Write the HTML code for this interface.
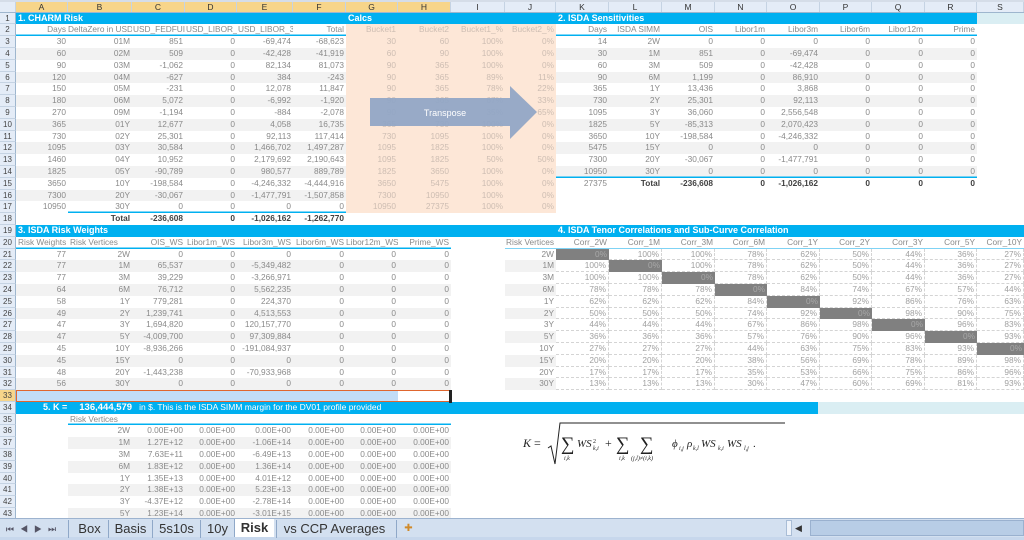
<!DOCTYPE html>
<html><head><meta charset="utf-8"><style>
*{margin:0;padding:0;box-sizing:border-box}
body{width:1024px;height:540px;overflow:hidden;background:#fff;font-family:"Liberation Sans",sans-serif;position:relative}
.ab{position:absolute}
#ch{position:absolute;left:0;top:0;width:1024px;height:12.6px;background:#e4ecf7;border-top:2px solid #d5dde8;display:flex;font-size:8.5px;color:#333;border-bottom:1px solid #9eb6ce}
#ch i{font-style:normal;text-align:center;border-right:1px solid #c5d3e3;line-height:10px}
#ch i.o{background:#f7d58a}
#g{position:absolute;left:0;top:12.6px;width:1024px}
.r{display:flex;height:11.8px;font-size:8.3px;color:#8a8a8a;line-height:11.8px}
.r i{font-style:normal;text-align:right;padding-right:2px;white-space:nowrap;overflow:hidden;height:11.8px;flex:none}
.r i:nth-child(1){width:16px;background:#e4ecf7;color:#444;text-align:center;padding:0;border-right:1px solid #9eb6ce;border-bottom:1px solid #c5d3e3;font-size:8px}
.r i:nth-child(2){width:52px}.r i:nth-child(3){width:64px}.r i:nth-child(4){width:53px}.r i:nth-child(5){width:52px}
.r i:nth-child(6){width:56px}.r i:nth-child(7){width:53px}.r i:nth-child(8){width:52px}.r i:nth-child(9){width:53px}
.r i:nth-child(10){width:54px}.r i:nth-child(11){width:51px}.r i:nth-child(12){width:53px}.r i:nth-child(13){width:53px}
.r i:nth-child(14){width:53px}.r i:nth-child(15){width:52px}.r i:nth-child(16){width:53px}.r i:nth-child(17){width:52px}
.r i:nth-child(18){width:53px}.r i:nth-child(19){width:52px}.r i:nth-child(20){width:47px}
.r i.g{background:#f2f2f2}
.r i.u{box-shadow:inset 0 -1.5px #00b0f0}
.r i.p{color:#cdbdb2}
.r i.b{font-weight:bold;color:#404040}
.r i.l{text-align:left;overflow:visible;padding-left:2px}
.r i.h{color:#fff;font-weight:bold;font-size:9px;overflow:visible;text-align:left;padding-left:2px}
.r i.x{border-right:1px dashed #d4d4d4;border-bottom:1px dashed #d4d4d4;color:#a0a0a0}
.r i.d{background:#808080;color:#a8a8a8}
.r i.o{background:#f7d58a}
.r i.v{box-shadow:inset 0 -1px #7fd3f5}
.tab{position:absolute;top:520px;height:18px;font-size:13px;color:#333;line-height:18px;text-align:center}
</style></head><body>
<div class="ab" style="left:16px;top:12.6px;width:961px;height:11.8px;background:#00b0f0"></div>
<div class="ab" style="left:977px;top:12.6px;width:47px;height:11.8px;background:#daeef3"></div>
<div class="ab" style="left:346px;top:24.4px;width:210px;height:188.8px;background:#fde7d7"></div>
<div class="ab" style="left:16px;top:225px;width:1008px;height:11.8px;background:#00b0f0"></div>
<div class="ab" style="left:16px;top:402px;width:802px;height:11.8px;background:#00b0f0"></div>
<div class="ab" style="left:818px;top:402px;width:206px;height:11.8px;background:#daeef3"></div>
<div class="ab" style="left:16px;top:390.2px;width:382px;height:11.8px;background:#c2ddf7"></div>

<div id="ch"><i style="width:16px"></i><i class="o" style="width:52px">A</i><i class="o" style="width:64px">B</i><i class="o" style="width:53px">C</i><i class="o" style="width:52px">D</i><i class="o" style="width:56px">E</i><i class="o" style="width:53px">F</i><i class="o" style="width:52px">G</i><i class="o" style="width:53px">H</i><i style="width:54px">I</i><i style="width:51px">J</i><i style="width:53px">K</i><i style="width:53px">L</i><i style="width:53px">M</i><i style="width:52px">N</i><i style="width:53px">O</i><i style="width:52px">P</i><i style="width:53px">Q</i><i style="width:52px">R</i><i style="width:47px">S</i></div>

<div id="g">
<div class="r"><i>1</i><i class="h">1. CHARM Risk</i><i></i><i></i><i></i><i></i><i></i><i class="h">Calcs</i><i></i><i></i><i></i><i class="h">2. ISDA Sensitivities</i><i></i><i></i><i></i><i></i><i></i><i></i><i></i><i></i></div>
<div class="r"><i>2</i><i class="u">Days</i><i class="u">DeltaZero in USD</i><i class="u" style="text-align:left;padding-left:1px">USD_FEDFUI</i><i class="u" style="text-align:left;padding-left:1px">USD_LIBOR_'</i><i class="u" style="text-align:left;padding-left:1px">USD_LIBOR_3I</i><i class="u">Total</i><i class="p">Bucket1</i><i class="p">Bucket2</i><i class="p">Bucket1_%</i><i class="p">Bucket2_%</i><i class="u">Days</i><i class="u">ISDA SIMM</i><i class="u">OIS</i><i class="u">Libor1m</i><i class="u">Libor3m</i><i class="u">Libor6m</i><i class="u">Libor12m</i><i class="u">Prime</i><i></i></div>
<div class="r"><i>3</i><i>30</i><i>01M</i><i>851</i><i>0</i><i>-69,474</i><i>-68,623</i><i class="p">30</i><i class="p">60</i><i class="p">100%</i><i class="p">0%</i><i>14</i><i>2W</i><i>0</i><i>0</i><i>0</i><i>0</i><i>0</i><i>0</i><i></i></div>
<div class="r"><i>4</i><i class="g">60</i><i class="g">02M</i><i class="g">509</i><i class="g">0</i><i class="g">-42,428</i><i class="g">-41,919</i><i class="p">60</i><i class="p">90</i><i class="p">100%</i><i class="p">0%</i><i class="g">30</i><i class="g">1M</i><i class="g">851</i><i class="g">0</i><i class="g">-69,474</i><i class="g">0</i><i class="g">0</i><i class="g">0</i><i></i></div>
<div class="r"><i>5</i><i>90</i><i>03M</i><i>-1,062</i><i>0</i><i>82,134</i><i>81,073</i><i class="p">90</i><i class="p">365</i><i class="p">100%</i><i class="p">0%</i><i>60</i><i>3M</i><i>509</i><i>0</i><i>-42,428</i><i>0</i><i>0</i><i>0</i><i></i></div>
<div class="r"><i>6</i><i class="g">120</i><i class="g">04M</i><i class="g">-627</i><i class="g">0</i><i class="g">384</i><i class="g">-243</i><i class="p">90</i><i class="p">365</i><i class="p">89%</i><i class="p">11%</i><i class="g">90</i><i class="g">6M</i><i class="g">1,199</i><i class="g">0</i><i class="g">86,910</i><i class="g">0</i><i class="g">0</i><i class="g">0</i><i></i></div>
<div class="r"><i>7</i><i>150</i><i>05M</i><i>-231</i><i>0</i><i>12,078</i><i>11,847</i><i class="p">90</i><i class="p">365</i><i class="p">78%</i><i class="p">22%</i><i>365</i><i>1Y</i><i>13,436</i><i>0</i><i>3,868</i><i>0</i><i>0</i><i>0</i><i></i></div>
<div class="r"><i>8</i><i class="g">180</i><i class="g">06M</i><i class="g">5,072</i><i class="g">0</i><i class="g">-6,992</i><i class="g">-1,920</i><i class="p">90</i><i class="p">365</i><i class="p">67%</i><i class="p">33%</i><i class="g">730</i><i class="g">2Y</i><i class="g">25,301</i><i class="g">0</i><i class="g">92,113</i><i class="g">0</i><i class="g">0</i><i class="g">0</i><i></i></div>
<div class="r"><i>9</i><i>270</i><i>09M</i><i>-1,194</i><i>0</i><i>-884</i><i>-2,078</i><i class="p">90</i><i class="p">365</i><i class="p">35%</i><i class="p">65%</i><i>1095</i><i>3Y</i><i>36,060</i><i>0</i><i>2,556,548</i><i>0</i><i>0</i><i>0</i><i></i></div>
<div class="r"><i>10</i><i class="g">365</i><i class="g">01Y</i><i class="g">12,677</i><i class="g">0</i><i class="g">4,058</i><i class="g">16,735</i><i class="p">365</i><i class="p">730</i><i class="p">100%</i><i class="p">0%</i><i class="g">1825</i><i class="g">5Y</i><i class="g">-85,313</i><i class="g">0</i><i class="g">2,070,423</i><i class="g">0</i><i class="g">0</i><i class="g">0</i><i></i></div>
<div class="r"><i>11</i><i>730</i><i>02Y</i><i>25,301</i><i>0</i><i>92,113</i><i>117,414</i><i class="p">730</i><i class="p">1095</i><i class="p">100%</i><i class="p">0%</i><i>3650</i><i>10Y</i><i>-198,584</i><i>0</i><i>-4,246,332</i><i>0</i><i>0</i><i>0</i><i></i></div>
<div class="r"><i>12</i><i class="g">1095</i><i class="g">03Y</i><i class="g">30,584</i><i class="g">0</i><i class="g">1,466,702</i><i class="g">1,497,287</i><i class="p">1095</i><i class="p">1825</i><i class="p">100%</i><i class="p">0%</i><i class="g">5475</i><i class="g">15Y</i><i class="g">0</i><i class="g">0</i><i class="g">0</i><i class="g">0</i><i class="g">0</i><i class="g">0</i><i></i></div>
<div class="r"><i>13</i><i>1460</i><i>04Y</i><i>10,952</i><i>0</i><i>2,179,692</i><i>2,190,643</i><i class="p">1095</i><i class="p">1825</i><i class="p">50%</i><i class="p">50%</i><i>7300</i><i>20Y</i><i>-30,067</i><i>0</i><i>-1,477,791</i><i>0</i><i>0</i><i>0</i><i></i></div>
<div class="r"><i>14</i><i class="g">1825</i><i class="g">05Y</i><i class="g">-90,789</i><i class="g">0</i><i class="g">980,577</i><i class="g">889,789</i><i class="p">1825</i><i class="p">3650</i><i class="p">100%</i><i class="p">0%</i><i class="g u">10950</i><i class="g u">30Y</i><i class="g u">0</i><i class="g u">0</i><i class="g u">0</i><i class="g u">0</i><i class="g u">0</i><i class="g u">0</i><i></i></div>
<div class="r"><i>15</i><i>3650</i><i>10Y</i><i>-198,584</i><i>0</i><i>-4,246,332</i><i>-4,444,916</i><i class="p">3650</i><i class="p">5475</i><i class="p">100%</i><i class="p">0%</i><i>27375</i><i class="b">Total</i><i class="b">-236,608</i><i class="b">0</i><i class="b">-1,026,162</i><i class="b">0</i><i class="b">0</i><i class="b">0</i><i></i></div>
<div class="r"><i>16</i><i class="g">7300</i><i class="g">20Y</i><i class="g">-30,067</i><i class="g">0</i><i class="g">-1,477,791</i><i class="g">-1,507,858</i><i class="p">7300</i><i class="p">10950</i><i class="p">100%</i><i class="p">0%</i><i></i><i></i><i></i><i></i><i></i><i></i><i></i><i></i><i></i></div>
<div class="r"><i>17</i><i>10950</i><i class="u">30Y</i><i class="u">0</i><i class="u">0</i><i class="u">0</i><i class="u">0</i><i class="p">10950</i><i class="p">27375</i><i class="p">100%</i><i class="p">0%</i><i></i><i></i><i></i><i></i><i></i><i></i><i></i><i></i><i></i></div>
<div class="r"><i>18</i><i></i><i class="b">Total</i><i class="b">-236,608</i><i class="b">0</i><i class="b">-1,026,162</i><i class="b">-1,262,770</i><i></i><i></i><i></i><i></i><i></i><i></i><i></i><i></i><i></i><i></i><i></i><i></i><i></i></div>
<div class="r"><i>19</i><i class="h">3. ISDA Risk Weights</i><i></i><i></i><i></i><i></i><i></i><i></i><i></i><i></i><i></i><i class="h">4. ISDA Tenor Correlations and Sub-Curve Correlation</i><i></i><i></i><i></i><i></i><i></i><i></i><i></i><i></i></div>
<div class="r"><i>20</i><i class="u l">Risk Weights</i><i class="u l">Risk Vertices</i><i class="u">OIS_WS</i><i class="u">Libor1m_WS</i><i class="u">Libor3m_WS</i><i class="u">Libor6m_WS</i><i class="u">Libor12m_WS</i><i class="u">Prime_WS</i><i></i><i class="v">Risk Vertices</i><i class="v">Corr_2W</i><i class="v">Corr_1M</i><i class="v">Corr_3M</i><i class="v">Corr_6M</i><i class="v">Corr_1Y</i><i class="v">Corr_2Y</i><i class="v">Corr_3Y</i><i class="v">Corr_5Y</i><i class="v">Corr_10Y</i></div>
<div class="r"><i>21</i><i>77</i><i>2W</i><i>0</i><i>0</i><i>0</i><i>0</i><i>0</i><i>0</i><i></i><i>2W</i><i class="d">0%</i><i class="x">100%</i><i class="x">100%</i><i class="x">78%</i><i class="x">62%</i><i class="x">50%</i><i class="x">44%</i><i class="x">36%</i><i class="x">27%</i></div>
<div class="r"><i>22</i><i class="g">77</i><i class="g">1M</i><i class="g">65,537</i><i class="g">0</i><i class="g">-5,349,482</i><i class="g">0</i><i class="g">0</i><i class="g">0</i><i></i><i class="g">1M</i><i class="x">100%</i><i class="d">0%</i><i class="x">100%</i><i class="x">78%</i><i class="x">62%</i><i class="x">50%</i><i class="x">44%</i><i class="x">36%</i><i class="x">27%</i></div>
<div class="r"><i>23</i><i>77</i><i>3M</i><i>39,229</i><i>0</i><i>-3,266,971</i><i>0</i><i>0</i><i>0</i><i></i><i>3M</i><i class="x">100%</i><i class="x">100%</i><i class="d">0%</i><i class="x">78%</i><i class="x">62%</i><i class="x">50%</i><i class="x">44%</i><i class="x">36%</i><i class="x">27%</i></div>
<div class="r"><i>24</i><i class="g">64</i><i class="g">6M</i><i class="g">76,712</i><i class="g">0</i><i class="g">5,562,235</i><i class="g">0</i><i class="g">0</i><i class="g">0</i><i></i><i class="g">6M</i><i class="x">78%</i><i class="x">78%</i><i class="x">78%</i><i class="d">0%</i><i class="x">84%</i><i class="x">74%</i><i class="x">67%</i><i class="x">57%</i><i class="x">44%</i></div>
<div class="r"><i>25</i><i>58</i><i>1Y</i><i>779,281</i><i>0</i><i>224,370</i><i>0</i><i>0</i><i>0</i><i></i><i>1Y</i><i class="x">62%</i><i class="x">62%</i><i class="x">62%</i><i class="x">84%</i><i class="d">0%</i><i class="x">92%</i><i class="x">86%</i><i class="x">76%</i><i class="x">63%</i></div>
<div class="r"><i>26</i><i class="g">49</i><i class="g">2Y</i><i class="g">1,239,741</i><i class="g">0</i><i class="g">4,513,553</i><i class="g">0</i><i class="g">0</i><i class="g">0</i><i></i><i class="g">2Y</i><i class="x">50%</i><i class="x">50%</i><i class="x">50%</i><i class="x">74%</i><i class="x">92%</i><i class="d">0%</i><i class="x">98%</i><i class="x">90%</i><i class="x">75%</i></div>
<div class="r"><i>27</i><i>47</i><i>3Y</i><i>1,694,820</i><i>0</i><i>120,157,770</i><i>0</i><i>0</i><i>0</i><i></i><i>3Y</i><i class="x">44%</i><i class="x">44%</i><i class="x">44%</i><i class="x">67%</i><i class="x">86%</i><i class="x">98%</i><i class="d">0%</i><i class="x">96%</i><i class="x">83%</i></div>
<div class="r"><i>28</i><i class="g">47</i><i class="g">5Y</i><i class="g">-4,009,700</i><i class="g">0</i><i class="g">97,309,884</i><i class="g">0</i><i class="g">0</i><i class="g">0</i><i></i><i class="g">5Y</i><i class="x">36%</i><i class="x">36%</i><i class="x">36%</i><i class="x">57%</i><i class="x">76%</i><i class="x">90%</i><i class="x">96%</i><i class="d">0%</i><i class="x">93%</i></div>
<div class="r"><i>29</i><i>45</i><i>10Y</i><i>-8,936,266</i><i>0</i><i>-191,084,937</i><i>0</i><i>0</i><i>0</i><i></i><i>10Y</i><i class="x">27%</i><i class="x">27%</i><i class="x">27%</i><i class="x">44%</i><i class="x">63%</i><i class="x">75%</i><i class="x">83%</i><i class="x">93%</i><i class="d">0%</i></div>
<div class="r"><i>30</i><i class="g">45</i><i class="g">15Y</i><i class="g">0</i><i class="g">0</i><i class="g">0</i><i class="g">0</i><i class="g">0</i><i class="g">0</i><i></i><i class="g">15Y</i><i class="x">20%</i><i class="x">20%</i><i class="x">20%</i><i class="x">38%</i><i class="x">56%</i><i class="x">69%</i><i class="x">78%</i><i class="x">89%</i><i class="x">98%</i></div>
<div class="r"><i>31</i><i>48</i><i>20Y</i><i>-1,443,238</i><i>0</i><i>-70,933,968</i><i>0</i><i>0</i><i>0</i><i></i><i>20Y</i><i class="x">17%</i><i class="x">17%</i><i class="x">17%</i><i class="x">35%</i><i class="x">53%</i><i class="x">66%</i><i class="x">75%</i><i class="x">86%</i><i class="x">96%</i></div>
<div class="r"><i>32</i><i class="g">56</i><i class="g">30Y</i><i class="g">0</i><i class="g">0</i><i class="g">0</i><i class="g">0</i><i class="g">0</i><i class="g">0</i><i></i><i class="g">30Y</i><i class="x">13%</i><i class="x">13%</i><i class="x">13%</i><i class="x">30%</i><i class="x">47%</i><i class="x">60%</i><i class="x">69%</i><i class="x">81%</i><i class="x">93%</i></div>
<div class="r"><i class="o">33</i><i></i><i></i><i></i><i></i><i></i><i></i><i></i><i></i><i></i><i></i><i></i><i></i><i></i><i></i><i></i><i></i><i></i><i></i><i></i></div>
<div class="r"><i>34</i><i></i><i class="h" style="text-align:left;padding-left:0;overflow:visible"><span style="margin-left:-25px">5. K =</span><span style="margin-left:12px;font-size:9.5px">136,444,579</span><span style="margin-left:7px;font-weight:normal;font-size:8.5px">in $. This is the ISDA SIMM margin for the DV01 profile provided</span></i><i></i><i></i><i></i><i></i><i></i><i></i><i></i><i></i><i></i><i></i><i></i><i></i><i></i><i></i><i></i><i></i><i></i></div>
<div class="r"><i>35</i><i></i><i class="u l">Risk Vertices</i><i class="u"></i><i class="u"></i><i class="u"></i><i class="u"></i><i class="u"></i><i class="u"></i><i></i><i></i><i></i><i></i><i></i><i></i><i></i><i></i><i></i><i></i><i></i></div>
<div class="r"><i>36</i><i></i><i>2W</i><i>0.00E+00</i><i>0.00E+00</i><i>0.00E+00</i><i>0.00E+00</i><i>0.00E+00</i><i>0.00E+00</i><i></i><i></i><i></i><i></i><i></i><i></i><i></i><i></i><i></i><i></i><i></i></div>
<div class="r"><i>37</i><i></i><i class="g">1M</i><i class="g">1.27E+12</i><i class="g">0.00E+00</i><i class="g">-1.06E+14</i><i class="g">0.00E+00</i><i class="g">0.00E+00</i><i class="g">0.00E+00</i><i></i><i></i><i></i><i></i><i></i><i></i><i></i><i></i><i></i><i></i><i></i></div>
<div class="r"><i>38</i><i></i><i>3M</i><i>7.63E+11</i><i>0.00E+00</i><i>-6.49E+13</i><i>0.00E+00</i><i>0.00E+00</i><i>0.00E+00</i><i></i><i></i><i></i><i></i><i></i><i></i><i></i><i></i><i></i><i></i><i></i></div>
<div class="r"><i>39</i><i></i><i class="g">6M</i><i class="g">1.83E+12</i><i class="g">0.00E+00</i><i class="g">1.36E+14</i><i class="g">0.00E+00</i><i class="g">0.00E+00</i><i class="g">0.00E+00</i><i></i><i></i><i></i><i></i><i></i><i></i><i></i><i></i><i></i><i></i><i></i></div>
<div class="r"><i>40</i><i></i><i>1Y</i><i>1.35E+13</i><i>0.00E+00</i><i>4.01E+12</i><i>0.00E+00</i><i>0.00E+00</i><i>0.00E+00</i><i></i><i></i><i></i><i></i><i></i><i></i><i></i><i></i><i></i><i></i><i></i></div>
<div class="r"><i>41</i><i></i><i class="g">2Y</i><i class="g">1.38E+13</i><i class="g">0.00E+00</i><i class="g">5.23E+13</i><i class="g">0.00E+00</i><i class="g">0.00E+00</i><i class="g">0.00E+00</i><i></i><i></i><i></i><i></i><i></i><i></i><i></i><i></i><i></i><i></i><i></i></div>
<div class="r"><i>42</i><i></i><i>3Y</i><i>-4.37E+12</i><i>0.00E+00</i><i>-2.78E+14</i><i>0.00E+00</i><i>0.00E+00</i><i>0.00E+00</i><i></i><i></i><i></i><i></i><i></i><i></i><i></i><i></i><i></i><i></i><i></i></div>
<div class="r"><i>43</i><i></i><i class="g">5Y</i><i class="g">1.23E+14</i><i class="g">0.00E+00</i><i class="g">-3.01E+15</i><i class="g">0.00E+00</i><i class="g">0.00E+00</i><i class="g">0.00E+00</i><i></i><i></i><i></i><i></i><i></i><i></i><i></i><i></i><i></i><i></i><i></i></div>
</div>

<!-- selection outline row 33 -->
<div class="ab" style="left:16px;top:390px;width:435px;height:12.2px;border:1.5px solid #e0662e"></div>
<div class="ab" style="left:449px;top:390px;width:3px;height:13px;background:#222"></div>

<!-- transpose arrow -->
<svg class="ab" style="left:365px;top:84px" width="175" height="58">
<polygon points="5,14 145,14 145,2 172,28 145,55 145,42 5,42" fill="#8fa5c6" fill-opacity="0.92"/>
<text x="80" y="32" font-family="Liberation Sans,sans-serif" font-size="9" fill="#fff" text-anchor="middle">Transpose</text>
</svg>

<!-- formula -->
<svg class="ab" style="left:515px;top:420px" width="290" height="50" font-family="Liberation Serif,serif" fill="#222">
<text x="8" y="27" font-size="12" font-style="italic">K</text>
<text x="19" y="27" font-size="12">=</text>
<polyline points="33,28 36,26 40,44 45,3 270,3" fill="none" stroke="#222" stroke-width="1"/>
<text x="46" y="30" font-size="19">∑</text>
<text x="49" y="40" font-size="6" font-style="italic">i,k</text>
<text x="62" y="27" font-size="11" font-style="italic">WS</text>
<text x="78" y="23" font-size="6">2</text>
<text x="78" y="30" font-size="6" font-style="italic">k,i</text>
<text x="90" y="27" font-size="12">+</text>
<text x="101" y="30" font-size="19">∑</text>
<text x="104" y="40" font-size="6" font-style="italic">i,k</text>
<text x="125" y="30" font-size="19">∑</text>
<text x="116" y="40" font-size="6" font-style="italic">(j,l)≠(i,k)</text>
<text x="157" y="27" font-size="11" font-style="italic">ϕ</text>
<text x="164" y="30" font-size="6" font-style="italic">i,j</text>
<text x="172" y="27" font-size="11" font-style="italic">ρ</text>
<text x="178" y="30" font-size="6" font-style="italic">k,l</text>
<text x="186" y="27" font-size="11" font-style="italic">WS</text>
<text x="203" y="30" font-size="6" font-style="italic">k,i</text>
<text x="212" y="27" font-size="11" font-style="italic">WS</text>
<text x="229" y="30" font-size="6" font-style="italic">l,j</text>
<text x="238" y="27" font-size="11">.</text>
</svg>

<!-- tab bar -->
<div class="ab" style="left:0;top:518px;width:1024px;height:22px;background:#d3e0f0;border-top:1px solid #9db3cf"></div>
<div class="ab" style="left:0;top:537px;width:1024px;height:3px;background:#c7d7ec"></div>
<div class="tab" style="left:4px;width:60px;font-size:9px;color:#556;letter-spacing:6px">⏮◀▶⏭</div>
<div class="tab" style="left:68px;width:42px;border-left:1px solid #8fa8c8">Box</div>
<div class="tab" style="left:108px;width:44px;border-left:1px solid #8fa8c8">Basis</div>
<div class="tab" style="left:152px;width:48px;border-left:1px solid #8fa8c8">5s10s</div>
<div class="tab" style="left:200px;width:34px;border-left:1px solid #8fa8c8">10y</div>
<div class="tab" style="left:234px;width:40px;background:#fff;font-weight:bold;border-left:1px solid #8fa8c8;top:519px">Risk</div>
<div class="tab" style="left:276px;width:116px;border-left:1px solid #8fa8c8">vs CCP Averages</div>
<div class="tab" style="left:396px;width:24px;border-left:1px solid #8fa8c8;font-size:10px;color:#d08a2a">✚</div>
<div class="ab" style="left:786px;top:520px;width:6px;height:16px;background:#eef3fa;border:1px solid #a9bdd6"></div>
<div class="ab" style="left:795px;top:520px;width:12px;height:16px;font-size:9px;color:#333;line-height:16px">◀</div>
<div class="ab" style="left:810px;top:520px;width:214px;height:16px;background:#b8cde6;border:1px solid #9ab1cf"></div>
</body></html>
